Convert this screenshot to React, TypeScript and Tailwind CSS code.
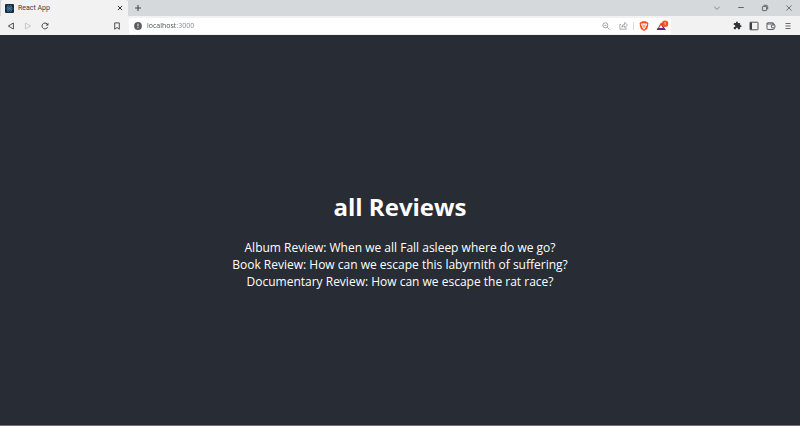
import type { ReactNode } from 'react';

const reviews = [
  'Album Review: When we all Fall asleep where do we go?',
  'Book Review: How can we escape this labyrnith of suffering?',
  'Documentary Review: How can we escape the rat race?',
];

function IconButton({ label, className = '', children }: { label: string; className?: string; children: ReactNode }) {
  return (
    <button type="button" aria-label={label} className={`flex h-4 w-4 shrink-0 items-center justify-center ${className}`}>
      {children}
    </button>
  );
}

function TabStrip() {
  return (
    <div className="flex h-4 items-stretch bg-[#d5d9dc] text-[#3c4043]">
      <div className="ml-px flex w-[127px] items-center rounded-t-xs bg-[#f2f2f2] pl-1">
        <svg viewBox="0 0 9 9" className="h-[9px] w-[9px] shrink-0">
          <rect width="9" height="9" rx="1" fill="#1b2b3c" />
          <g fill="none" stroke="#4583ae" strokeWidth=".6">
            <ellipse cx="4.5" cy="4.5" rx="3.4" ry="1.3" />
            <ellipse cx="4.5" cy="4.5" rx="3.4" ry="1.3" transform="rotate(60 4.5 4.5)" />
            <ellipse cx="4.5" cy="4.5" rx="3.4" ry="1.3" transform="rotate(120 4.5 4.5)" />
          </g>
          <circle cx="4.5" cy="4.5" r=".7" fill="#4f90bd" />
        </svg>
        <span className="ml-1 flex-1 font-[Roboto,sans-serif] text-[7px] leading-none">React App</span>
        <IconButton label="Close tab">
          <svg viewBox="0 0 6 6" className="h-1.5 w-1.5">
            <path d="M.9 .9l4.2 4.2M5.1 .9L.9 5.1" stroke="#333" strokeWidth="1" />
          </svg>
        </IconButton>
      </div>
      <IconButton label="New tab" className="ml-0.5">
        <svg viewBox="0 0 8 8" className="h-2 w-2">
          <path d="M4 1v6M1 4h6" stroke="#44484c" strokeWidth="1.1" />
        </svg>
      </IconButton>
      <div className="ml-auto flex gap-2 pr-[3px]">
        <IconButton label="Search tabs">
          <svg viewBox="0 0 8 8" className="h-2 w-2">
            <path d="M1.3 2.8L4 5.4l2.7-2.6" fill="none" stroke="#6b6f73" strokeWidth=".8" />
          </svg>
        </IconButton>
        <IconButton label="Minimize">
          <svg viewBox="0 0 8 8" className="h-2 w-2">
            <path d="M1.2 3.5h5.6" stroke="#55585c" strokeWidth=".9" />
          </svg>
        </IconButton>
        <IconButton label="Restore">
          <svg viewBox="0 0 8 8" className="h-2 w-2" fill="none" stroke="#44474b" strokeWidth=".8">
            <rect x="1.4" y="2.4" width="4.2" height="4.2" rx=".7" />
            <path d="M2.7 1.3h2.6q1.4 0 1.4 1.4v2.6" />
          </svg>
        </IconButton>
        <IconButton label="Close window">
          <svg viewBox="0 0 8 8" className="h-2 w-2">
            <path d="M1.4 1.4l5.2 5.2M6.6 1.4L1.4 6.6" stroke="#55585c" strokeWidth=".8" />
          </svg>
        </IconButton>
      </div>
    </div>
  );
}

function AddressBar() {
  return (
    <div className="flex h-4 min-w-0 flex-1 items-center rounded-xs bg-white pr-px pl-[5px]">
      <svg viewBox="0 0 8 8" className="h-2 w-2 shrink-0">
        <circle cx="4" cy="4" r="3.9" fill="#5a5e63" />
        <path d="M4 1.700v2.700M4 5.200v1" stroke="#fff" strokeWidth=".9" />
      </svg>
      <input
        aria-label="Address"
        defaultValue="localhost:3000"
        className="ml-[5px] h-4 min-w-0 flex-1 bg-linear-to-r from-[#45494e] from-[28px] to-[#7f8489] to-[28px] bg-clip-text text-[7px] text-transparent outline-none"
      />
      <div className="flex items-center gap-px">
        <IconButton label="Zoom">
          <svg viewBox="0 0 8 8" className="h-2 w-2" fill="none" stroke="#8b8e92" strokeWidth=".8">
            <circle cx="3.3" cy="3.3" r="2.5" />
            <path d="M5.2 5.2l2.3 2.3M2.2 3.3h2.2" />
          </svg>
        </IconButton>
        <IconButton label="Share">
          <svg viewBox="0 0 9 9" className="h-[9px] w-[9px]" fill="none" stroke="#85888c" strokeWidth=".7">
            <path d="M2.2 3.4H.9v4.8h6.3V6.7" />
            <path d="M2.8 6.3q.2-3 3-3V1.3l2.6 2.8-2.6 2.6V5Q4 4.900 2.800 6.300z" />
          </svg>
        </IconButton>
        <div className="mx-px h-2 w-px bg-[#dcdcdc]" />
        <IconButton label="Brave Shields">
          <svg viewBox="0 0 10 10" className="h-2.5 w-2.5">
            <path d="M3 .3h4l.9 1 .9-.1.7 1.3-.4.8.2 1-1.2 3.6L5 9.900 1.900 7.900.7 4.300l.2-1-.4-.8.7-1.300.9.100z" fill="#f4501e" />
            <path d="M2.400 2.400l1.300.2L5 2.200l1.300.4 1.300-.2.6 1.300-1.500 1.900.2.800-1.100.5.5.7L5 8.400l-1.300-.8.5-.7-1.100-.5.2-.8-1.500-1.900z" fill="#fff" />
            <path d="M3 3.700l1.500.5-.3 1.600h1.600l-.3-1.600L7 3.700M4.300 6.400L5 7l.7-.6" fill="none" stroke="#f4501e" strokeWidth=".5" />
          </svg>
        </IconButton>
        <IconButton label="Brave Rewards, 1 notification" className="ml-px">
          <svg viewBox="0 0 13 12" className="h-3 w-[13px]">
            <path d="M5.1 2.200L.6 10h3l1.500-2.600z" fill="#f4501e" />
            <path d="M5.1 2.200L9.600 10h-3L5.100 7.400z" fill="#a3225c" />
            <path d="M.6 10h9L8.400 8H1.800z" fill="#5b2d8c" />
            <path d="M5.1 5l1.800 3.100H3.300z" fill="#fff" />
            <circle cx="9.1" cy="3.800" r="3.200" fill="#f4501e" />
            <path d="M8.400 2.900l.9-.6v3" fill="none" stroke="#fff" strokeWidth=".6" />
          </svg>
        </IconButton>
      </div>
    </div>
  );
}

function Toolbar() {
  return (
    <div className="flex h-[19px] items-center bg-[#f2f2f2]">
      <div className="flex w-[129px] shrink-0 gap-px pr-1 pl-[3px]">
        <IconButton label="Back">
          <svg viewBox="0 0 8 8" className="h-2 w-2">
            <path d="M6.4 1v6L1.3 4z" fill="none" stroke="#3c4043" strokeWidth=".9" strokeLinejoin="round" />
          </svg>
        </IconButton>
        <IconButton label="Forward">
          <svg viewBox="0 0 8 8" className="h-2 w-2">
            <path d="M1.4 1v6l5.1-3z" fill="none" stroke="#bcbcbc" strokeWidth=".8" strokeLinejoin="round" />
          </svg>
        </IconButton>
        <IconButton label="Reload">
          <svg viewBox="0 0 8 8" className="h-2 w-2">
            <path d="M6.600 5.100A2.900 2.900 0 1 1 6 1.900l.6.7" fill="none" stroke="#3c4043" strokeWidth="1" />
            <path d="M7.400.7v2.800H4.600z" fill="#3c4043" />
          </svg>
        </IconButton>
        <IconButton label="Bookmark this page" className="ml-auto">
          <svg viewBox="0 0 8 8" className="h-2 w-2">
            <path d="M1.700.9h4.600v6.300L4 5.500 1.700 7.200z" fill="none" stroke="#3c4043" strokeWidth=".9" />
          </svg>
        </IconButton>
      </div>
      <AddressBar />
      <div className="flex w-[129px] shrink-0 justify-end gap-px pr-1">
        <IconButton label="Extensions">
          <svg viewBox="0 0 24 24" className="h-[9px] w-[9px]">
            <path
              d="M20.500 11H19V7a2 2 0 0 0-2-2h-4V3.500a2.500 2.500 0 0 0-5 0V5H4a2 2 0 0 0-2 2v3.800h1.500a2.700 2.700 0 0 1 0 5.400H2V20a2 2 0 0 0 2 2h3.800v-1.500a2.700 2.700 0 0 1 5.400 0V22H17a2 2 0 0 0 2-2v-4h1.500a2.500 2.500 0 0 0 0-5z"
              fill="#333639"
            />
          </svg>
        </IconButton>
        <IconButton label="Sidebar">
          <svg viewBox="0 0 10 10" className="h-2.5 w-2.5">
            <rect x="1" y="1.200" width="8" height="7.600" rx=".6" fill="none" stroke="#3c4043" strokeWidth=".9" />
            <path d="M1 1.400h2v7.200H1z" fill="#3c4043" />
          </svg>
        </IconButton>
        <IconButton label="Wallet">
          <svg viewBox="0 0 10 10" className="h-2.5 w-2.5" fill="none" stroke="#4a4e52" strokeWidth=".9">
            <path d="M8.200 4V3H1.600q-.6 0-.6-.6T1.600 1.800h5.600V3M1 2.400v5.200q0 .9.9.9h5.500q.8 0 .8-.9V7" />
            <rect x="5.400" y="4.100" width="3.600" height="2.700" rx=".7" />
          </svg>
        </IconButton>
        <IconButton label="Menu">
          <svg viewBox="0 0 8 8" className="h-2 w-2">
            <path d="M1.500 1.500h5M1.500 4h5M1.500 6.500h5" stroke="#55585c" strokeWidth=".9" />
          </svg>
        </IconButton>
      </div>
    </div>
  );
}

export default function App() {
  return (
    <div className="flex min-h-screen flex-col font-['Open_Sans','Noto_Sans',sans-serif]">
      <header>
        <TabStrip />
        <Toolbar />
      </header>
      <main className="flex flex-1 flex-col items-center justify-center border-b border-[#6f7078] bg-[#282c34] pt-5 text-center text-white">
        <h1 className="mb-4 text-[24px] leading-8 font-bold">all Reviews</h1>
        {reviews.map((review) => (
          <div key={review} className="text-[12px] leading-[17px]">
            {review}
          </div>
        ))}
      </main>
    </div>
  );
}
